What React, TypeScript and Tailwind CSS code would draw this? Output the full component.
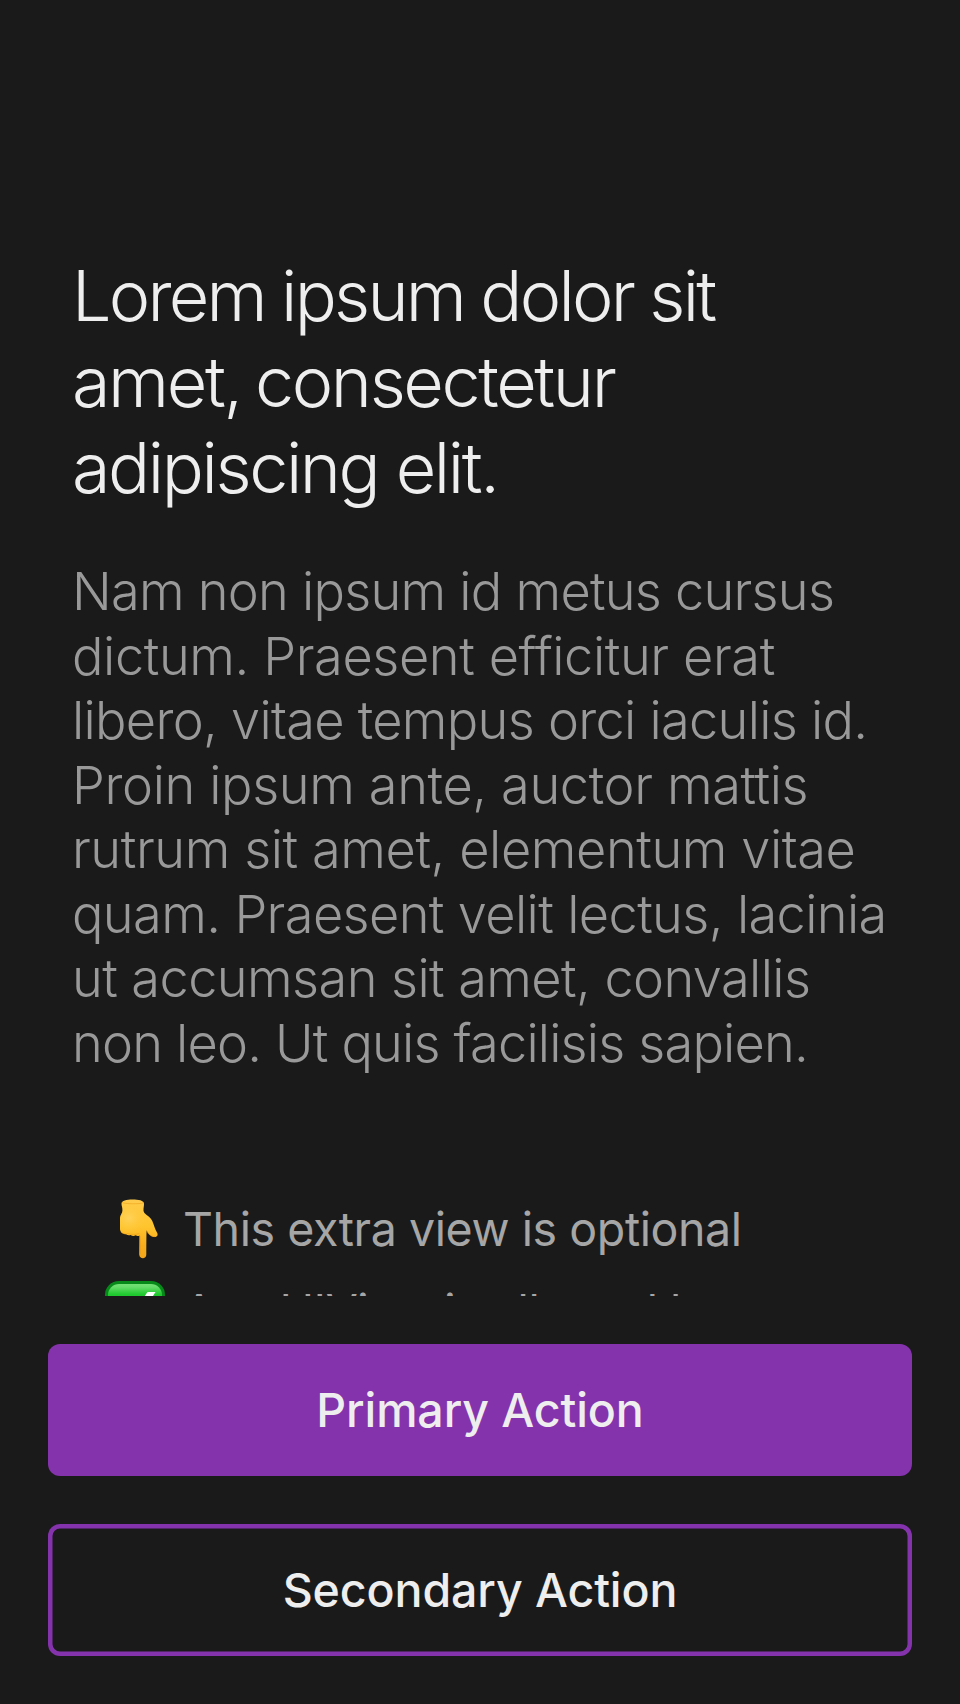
const heading = [
  { text: "Lorem ipsum dolor sit", tracking: "tracking-[-2.75px] [word-spacing:-0.8px]" },
  { text: "amet, consectetur", tracking: "tracking-[-2.4px] [word-spacing:-3px]" },
  { text: "adipiscing elit.", tracking: "tracking-[-2.4px]" },
];

const body = [
  { text: "Nam non ipsum id metus cursus", tracking: "tracking-[-0.75px]" },
  { text: "dictum. Praesent efficitur erat", tracking: "tracking-[-0.4px]" },
  { text: "libero, vitae tempus orci iaculis id.", tracking: "tracking-[-0.7px]" },
  { text: "Proin ipsum ante, auctor mattis", tracking: "tracking-[-0.37px]" },
  { text: "rutrum sit amet, elementum vitae", tracking: "tracking-[-0.42px]" },
  { text: "quam. Praesent velit lectus, lacinia", tracking: "tracking-[-0.62px]" },
  { text: "ut accumsan sit amet, convallis", tracking: "tracking-[-0.58px]" },
  { text: "non leo. Ut quis facilisis sapien.", tracking: "tracking-[-0.8px]" },
];

function HandDown() {
  return (
    <svg className="h-[60px] w-[60px]" viewBox="0 0 60 60" fill="none" aria-hidden="true">
      <defs>
        <linearGradient id="skin" x1="30" y1="0" x2="32" y2="60" gradientUnits="userSpaceOnUse">
          <stop offset="0" stopColor="#ffcb4d" />
          <stop offset=".45" stopColor="#ffc52f" />
          <stop offset=".78" stopColor="#f8ae1c" />
          <stop offset="1" stopColor="#f2a51a" />
        </linearGradient>
        <radialGradient id="palm" cx="24" cy="19" r="17" gradientUnits="userSpaceOnUse">
          <stop offset="0" stopColor="#ffd35a" />
          <stop offset="1" stopColor="#ffc735" stopOpacity="0" />
        </radialGradient>
      </defs>
      <path
        d="M16.500 4.500C16.500 1.500 21.500.4 27.500.4S39 1.200 39 4.700c0 3-.8 5.300-.4 7.600.8 3.500 6.300 4.700 8.700 9.700 1.900 4.400 2.700 8.500 4.700 11.600 1.300 2.200.4 4-1.700 4.500-4.200.2-7.400-3.300-8.700-6.800-.2 5-.2 11-.3 24.300 0 5-6.800 5-7.100 0L34.500 36.500c-1.400.8-2.700.6-3.800-.2-1.800 1-3.700.8-5-.4-1.600.8-3.400.5-4.500-.7C17.500 35 15 33 15 30V20c0-4 2.400-5.500 2.500-8.500C17.600 8.500 16.500 7 16.500 4.500Z"
        fill="url(#skin)"
      />
      <path
        d="M16.500 4.500C16.500 1.500 21.500.4 27.500.4S39 1.200 39 4.700c0 3-.8 5.300-.4 7.600C42 16 42 25 40 31c-7 5-22 5-25-1V20c0-4 2.400-5.500 2.500-8.500C17.600 8.500 16.500 7 16.500 4.500Z"
        fill="url(#palm)"
      />
      <path d="M17 3.500c3 1.500 17.600 1.700 21.700.3M16 33c2 2 5 2.400 7 1.600 3 1.200 8 1.200 11.500-.2" stroke="#e99a12" strokeOpacity=".5" strokeWidth="1" />
      <path d="M35 37v18M41.800 32c1.500 3.500 5 6 8.500 5.600" stroke="#e79310" strokeOpacity=".6" strokeWidth="1" />
    </svg>
  );
}

function CheckBadge() {
  return (
    <svg className="h-[60px] w-[60px]" viewBox="0 0 60 60" fill="none" aria-hidden="true">
      <defs>
        <linearGradient id="badge" x1="30" y1="0" x2="30" y2="60" gradientUnits="userSpaceOnUse">
          <stop offset="0" stopColor="#7ee27f" />
          <stop offset=".1" stopColor="#67dc6b" />
          <stop offset=".22" stopColor="#1fc92f" />
          <stop offset="1" stopColor="#12b526" />
        </linearGradient>
      </defs>
      <rect width="60" height="60" rx="14" fill="#07891a" />
      <rect x="3" y="3" width="54" height="54" rx="11" fill="url(#badge)" />
      <path d="M42.500 11h8L26 50h-7L9 35l5-4 8 10Z" fill="#fff" />
    </svg>
  );
}

export default function App() {
  return (
    <main className="flex h-[1704px] w-[960px] flex-col overflow-hidden bg-[#1a1a1a] font-['Inter',sans-serif] text-[#eeeeee]">
      <section className="h-[1296px] shrink-0 overflow-hidden px-[72px] pt-[253px] whitespace-nowrap">
        <h1 className="text-[70px] leading-[86px] font-[330]">
          {heading.map((line) => (
            <span key={line.text} className={`block w-fit ${line.tracking}`}>{line.text}</span>
          ))}
        </h1>
        <p className="mt-[48px] text-[52.3px] leading-[64.5px] font-[320] text-[#999999]">
          {body.map((line) => (
            <span key={line.text} className={`block w-fit ${line.tracking}`}>{line.text}</span>
          ))}
        </p>
        <ul className="mt-[124px] flex flex-col gap-[22px] pl-[33px] text-[46.5px] leading-[60px] text-[#a6a6a6]">
          <li className="flex gap-[18px]">
            <HandDown />
            <span className="tracking-[-0.42px]">This extra view is optional</span>
          </li>
          <li className="flex gap-[18px]">
            <CheckBadge />
            <span className="tracking-[-0.42px]">Any UIView is allowed here</span>
          </li>
        </ul>
      </section>
      <footer className="flex flex-col gap-12 px-12 pt-12">
        <button className="h-[132px] rounded-xl bg-[#8532ad] pt-0.5 text-[46.5px] font-medium tracking-[-0.1px]">Primary Action</button>
        <button className="h-[132px] rounded-xl bg-[#1a1a1a] pt-0.5 text-[46.5px] font-medium tracking-[-0.1px] inset-ring-[4.500px] inset-ring-[#8532ad]">Secondary Action</button>
      </footer>
    </main>
  );
}
